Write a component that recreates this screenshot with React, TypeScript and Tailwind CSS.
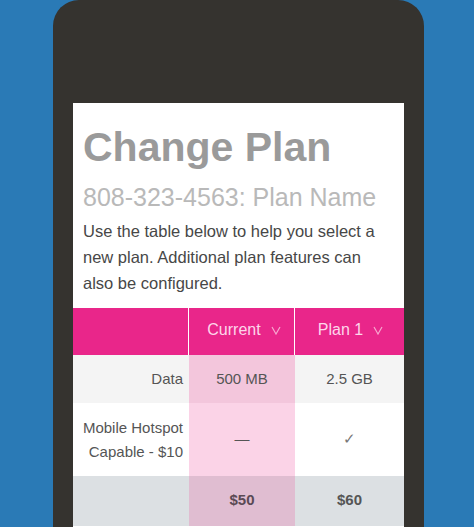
import React from "react";

function Chevron() {
  return (
    <svg width="10" height="9" viewBox="0 0 10 9" className="ml-[10px] mt-[1px]">
      <path d="M1 1 L5 8 L9 1" fill="none" stroke="#f7a6cf" strokeWidth="1.2" />
    </svg>
  );
}

export default function App() {
  return (
    <div
      className="h-[527px] w-[474px] overflow-hidden bg-[#2a7ab6]"
      style={{ fontFamily: '"Liberation Sans", Arial, sans-serif' }}
    >
      <div className="ml-[53px] h-[600px] w-[371px] rounded-t-[26px] bg-[#35332f] pt-[103px] px-[20px]">
        <div className="h-full bg-white">
          <div className="px-[10px] pt-[22px]">
            <h1 className="text-[41px] font-bold leading-[44px] text-[#9a9a9a]">Change Plan</h1>
            <h2 className="mt-[13px] text-[25px] leading-[30px] text-[#b9b9b9]">808-323-4563: Plan Name</h2>
            <p className="mt-[6px] w-[305px] text-[16.5px] leading-[26px] text-[#474747]">
              Use the table below to help you select a new plan. Additional plan features can also be configured.
            </p>
          </div>
          <div className="mt-[12px] grid grid-cols-[116px_106px_109px] text-[15px] text-[#555]">
            {/* header */}
            <div className="h-[47px] border-r border-white bg-[#e9268a]" />
            <div className="flex h-[47px] items-center justify-center border-r border-white bg-[#e9268a] pb-[3px] pl-[5px] text-[16px] text-[#fdd6ea]">
              <span>Current</span>
              <Chevron />
            </div>
            <div className="flex h-[47px] items-center justify-center bg-[#e9268a] pb-[3px] pl-[2px] text-[16px] text-[#fdd6ea]">
              <span>Plan 1</span>
              <Chevron />
            </div>
            {/* data row */}
            <div className="flex h-[48px] items-center justify-end bg-[#f4f4f4] pr-[6px]">Data</div>
            <div className="flex h-[48px] items-center justify-center bg-[#f3c6dc]">500 MB</div>
            <div className="flex h-[48px] items-center justify-center bg-[#f4f4f4]">2.5 GB</div>
            {/* hotspot row */}
            <div className="flex h-[73px] flex-col items-end justify-center bg-white pr-[6px] text-right leading-[24px]">
              <span>Mobile Hotspot</span>
              <span>Capable - $10</span>
            </div>
            <div className="flex h-[73px] items-center justify-center bg-[#fbd3e7] text-[#555]">—</div>
            <div className="flex h-[73px] items-center justify-center bg-white text-[#777]">✓</div>
            {/* total row */}
            <div className="h-[50px] bg-[#dce0e3]" />
            <div className="flex h-[50px] items-center justify-center bg-[#e0bdd1] pb-[2px] font-bold text-[#5a4a55]">$50</div>
            <div className="flex h-[50px] items-center justify-center bg-[#dce0e3] pb-[2px] font-bold text-[#555]">$60</div>
          </div>
        </div>
      </div>
    </div>
  );
}
